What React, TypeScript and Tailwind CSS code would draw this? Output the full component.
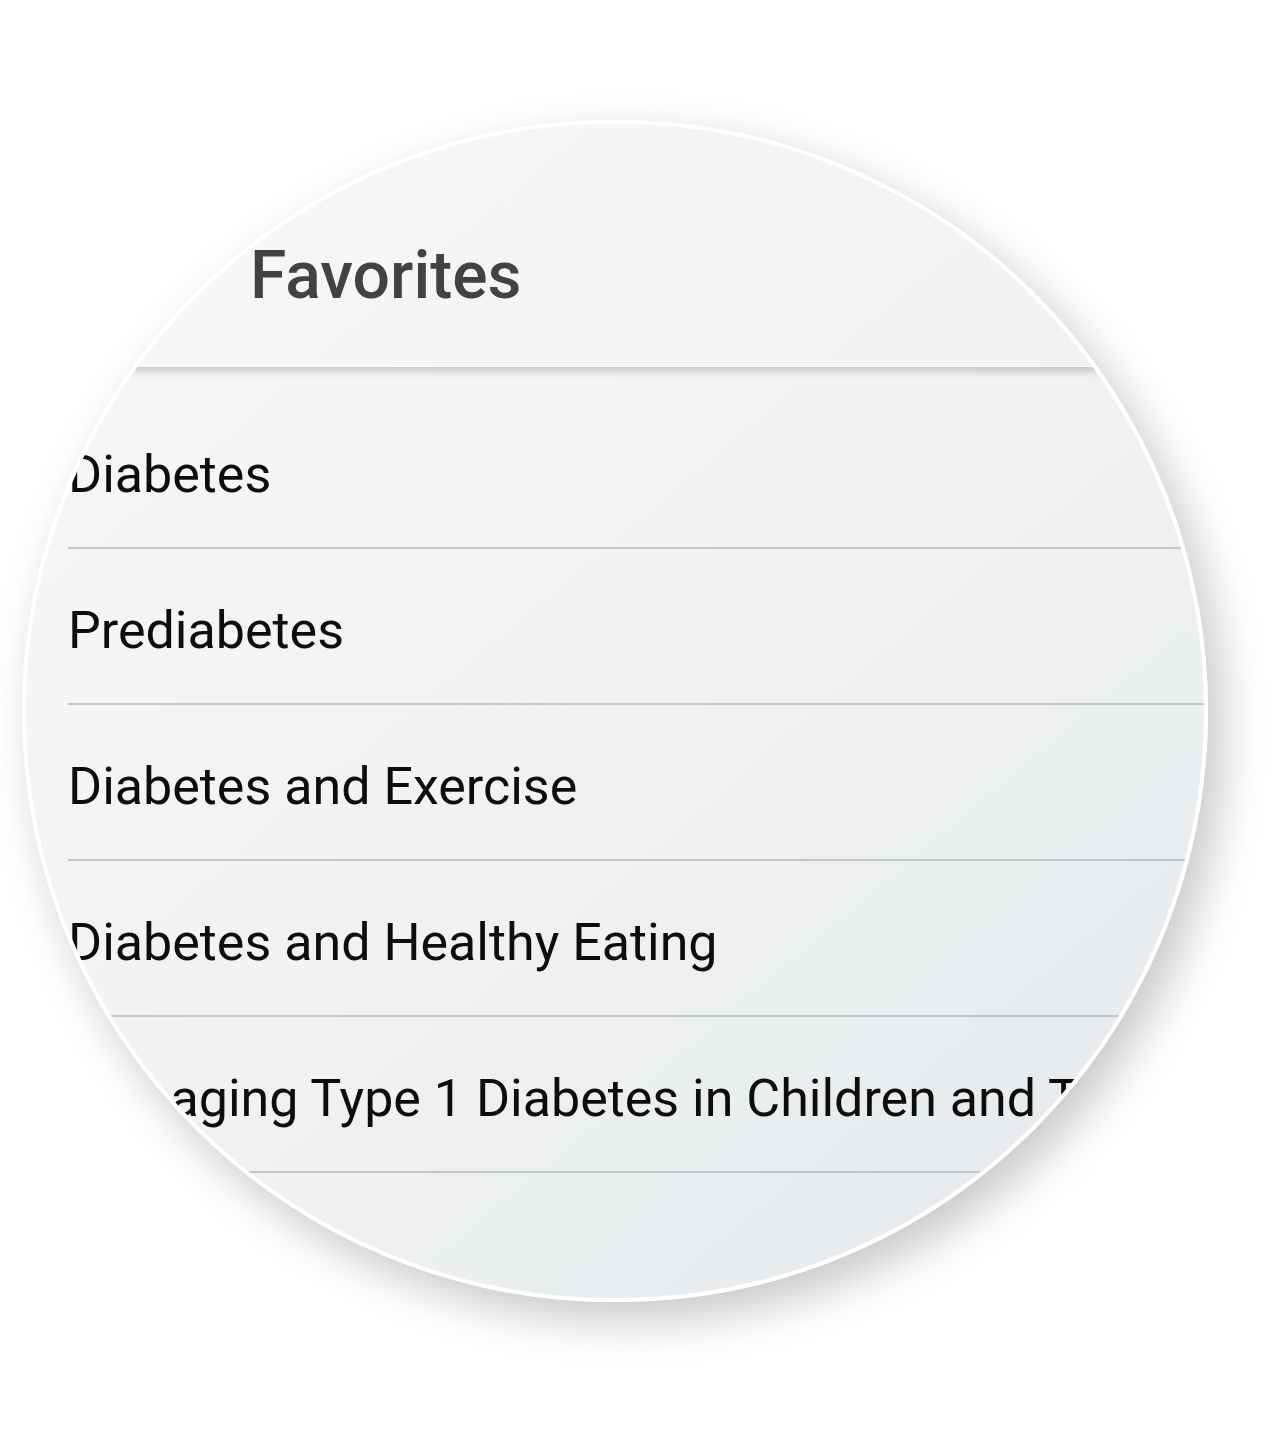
const favorites = [
  "Diabetes",
  "Prediabetes",
  "Diabetes and Exercise",
  "Diabetes and Healthy Eating",
  "Managing Type 1 Diabetes in Children and Teens",
];

export default function App() {
  return (
    <div className="w-[1280px] h-[1436px] bg-white overflow-hidden font-['Roboto','Liberation_Sans',sans-serif]">
      <div className="pt-[120px] pl-[22px]">
        <div className="w-[1186px] h-[1182px] rounded-full border-4 border-white overflow-hidden bg-[linear-gradient(140deg,#f8f8f8_0%,#f1f2f3_50%,#e4e9eb_100%)] shadow-[14px_18px_46px_rgba(0,0,0,0.22)]">
          <div className="relative z-10 h-[243px] pt-[113px] pl-[224px] border-b border-[#fbfbfb] shadow-[0_4px_8px_rgba(0,0,0,0.2)]">
            <h1 className="text-[66px] leading-[77px] font-medium text-[#424242]">Favorites</h1>
          </div>
          <ul className="mt-[26px]">
            {favorites.map((item) => (
              <li
                key={item}
                className="ml-[42px] h-[156px] flex items-center pt-[8px] border-b-2 border-[#c3c6c9]"
              >
                <span className="text-[52px] leading-[61px] text-[#0d0d0d] whitespace-nowrap">{item}</span>
              </li>
            ))}
          </ul>
        </div>
      </div>
    </div>
  );
}
